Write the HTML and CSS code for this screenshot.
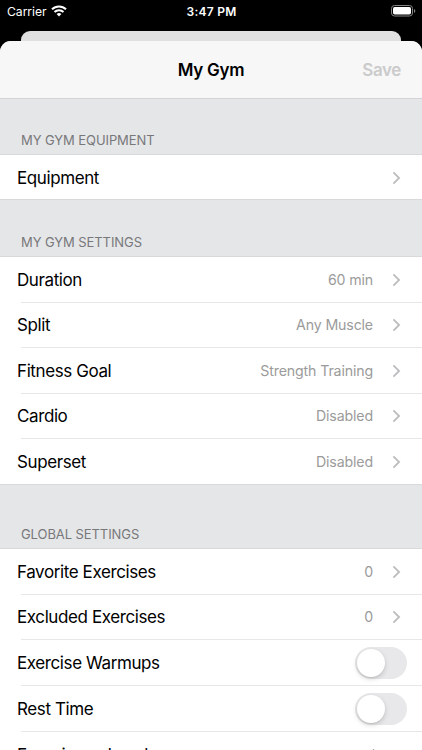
FILE: index.html
```html
<!DOCTYPE html>
<html lang="en">
<head>
<meta charset="utf-8">
<meta name="viewport" content="width=device-width">
<title>My Gym</title>
<link rel="stylesheet" href="styles.css">
</head>
<body>
<svg class="defs" width="0" height="0"><symbol id="chevron" viewBox="0 0 9 14"><path d="M1.4 1.4 7.1 7l-5.7 5.6" fill="none" stroke="#bdbdbf" stroke-width="1.8"/></symbol></svg>
<div class="phone">
  <header class="status">
    <div class="carrier"><span>Carrier</span>
      <svg width="16" height="12" viewBox="0 0 16 12" fill="none" stroke="#fff" stroke-width="2"><path d="M1 4.3a10 10 0 0 1 14 0M3.5 7a6.4 6.4 0 0 1 9 0"/><path d="M8 11.5 5.6 9.1a3.4 3.4 0 0 1 4.8 0z" fill="#fff" stroke="none"/></svg>
    </div>
    <time class="clock">3:47 PM</time>
    <svg class="battery" width="25" height="12" viewBox="0 0 25 12"><rect x=".5" y=".5" width="21" height="10.5" rx="3" fill="none" stroke="#858585"/><rect x="2" y="2" width="18" height="7.5" rx="1.7" fill="#fff"/><path d="M23 4v3.8q1.3-.6 1.3-1.9T23 4z" fill="#858585"/></svg>
  </header>
  <div class="back-card"></div>
  <main class="sheet">
    <nav class="bar"><span></span><h1>My Gym</h1><button class="save" disabled>Save</button></nav>
    <h2 class="head head-first">MY GYM EQUIPMENT</h2>
    <section class="group single">
      <div class="row"><span class="label">Equipment</span><svg class="chev"><use href="#chevron"/></svg></div>
    </section>
    <h2 class="head head-settings">MY GYM SETTINGS</h2>
    <section class="group">
      <div class="row"><span class="label">Duration</span><span class="value">60 min</span><svg class="chev"><use href="#chevron"/></svg></div>
      <div class="row"><span class="label">Split</span><span class="value">Any Muscle</span><svg class="chev"><use href="#chevron"/></svg></div>
      <div class="row"><span class="label">Fitness Goal</span><span class="value">Strength Training</span><svg class="chev"><use href="#chevron"/></svg></div>
      <div class="row"><span class="label">Cardio</span><span class="value">Disabled</span><svg class="chev"><use href="#chevron"/></svg></div>
      <div class="row"><span class="label">Superset</span><span class="value">Disabled</span><svg class="chev"><use href="#chevron"/></svg></div>
    </section>
    <h2 class="head head-global">GLOBAL SETTINGS</h2>
    <section class="group">
      <div class="row"><span class="label">Favorite Exercises</span><span class="value">0</span><svg class="chev"><use href="#chevron"/></svg></div>
      <div class="row"><span class="label">Excluded Exercises</span><span class="value">0</span><svg class="chev"><use href="#chevron"/></svg></div>
      <div class="row tall"><span class="label">Exercise Warmups</span><span class="toggle"><i></i></span></div>
      <div class="row tall"><span class="label">Rest Time</span><span class="toggle"><i></i></span></div>
      <div class="row level"><span class="label">Experience Level</span><svg class="picker" width="9" height="12" viewBox="0 0 9 12"><path d="M1.5 4 4.5 1l3 3M1.5 8l3 3 3-3" fill="none" stroke="#9b9b9b" stroke-width="1.5"/></svg></div>
    </section>
  </main>
</div>
</body>
</html>
```
FILE: styles.css
```css
* { box-sizing: border-box; }
body { margin: 0; background: #000; font-family: Inter, "Liberation Sans", sans-serif; }
.defs { position: absolute; }
.phone { width: 422px; height: 750px; overflow: hidden; background: #000; display: flex; flex-direction: column; }
.status { flex: none; height: 31px; padding: 0 6px 8px 7px; display: grid; grid-template-columns: 1fr auto 1fr; align-items: center; color: #fff; }
.carrier { display: flex; align-items: center; gap: 4px; font-size: 12.2px; line-height: 22px; letter-spacing: -.05px; }
.carrier svg { margin-top: -2px; }
.clock { font-size: 12px; font-weight: 600; letter-spacing: .25px; line-height: 22px; }
.battery { justify-self: end; margin-top: -1px; }
.back-card { flex: none; height: 20px; margin: 0 21px -10px; border-radius: 9px 9px 0 0; background: #dfe0df; }
.sheet { flex: none; height: 709px; overflow: hidden; border-radius: 11px 11px 0 0; background: #e5e6e8; }
.bar { height: 58px; padding: 0 21px; display: grid; grid-template-columns: 1fr auto 1fr; align-items: center; background: #f7f7f7; border-bottom: 1px solid #d3d3d5; }
.bar h1 { margin: 0; font-size: 17px; font-weight: 600; line-height: 24px; letter-spacing: -.3px; }
.save { justify-self: end; padding: 0; border: 0; background: none; font: 600 17px/24px Inter, sans-serif; letter-spacing: -.4px; color: #cbcbcb; }
.head { margin: 0; padding: 0 21px 6px; display: flex; align-items: flex-end; font-size: 13px; font-weight: 400; line-height: 16px; letter-spacing: -.08px; color: #78787b; }
.head-first { height: 55px; }
.head-settings { height: 56px; }
.head-global { height: 63px; }
.group { border-top: 1px solid #d9d9db; border-bottom: 1px solid #d9d9db; background: #fff; }
.row { height: 45.5px; padding: 0 21px 0 17px; display: flex; align-items: center; background: linear-gradient(#e7e7e8, #e7e7e8) 21px 100% / 100% 1px no-repeat; }
.row:last-child { background: none; height: 45px; }
.single .row:last-child { height: 44px; padding-top: 1px; }
.row.tall { height: 46px; padding-right: 15px; }
.label { flex: 1; font-size: 17px; line-height: 24px; letter-spacing: -.4px; color: #000; }
.value { font-size: 14.2px; line-height: 20px; letter-spacing: -.15px; color: #9b9b9b; }
.chev { width: 9px; height: 14px; margin-left: 19px; }
.level { padding-right: 44px; }
.toggle { width: 52px; height: 32px; padding: 2px; border-radius: 16px; background: #e8e8ea; }
.toggle i { display: block; width: 28px; height: 28px; border-radius: 50%; background: #fff; box-shadow: 0 2px 5px rgba(0,0,0,.16), 0 1px 1px rgba(0,0,0,.06); }
```
